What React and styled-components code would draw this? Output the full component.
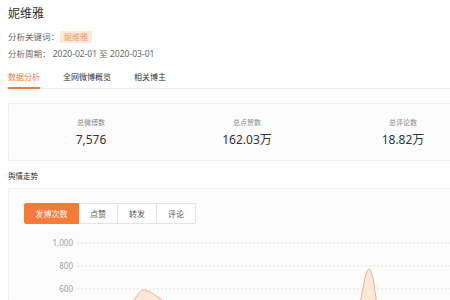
import styled, { createGlobalStyle } from "styled-components";

const GlobalStyle = createGlobalStyle`
  html, body {
    margin: 0;
    padding: 0;
    background: #ffffff;
    overflow: hidden;
  }
  body {
    font-family: "Noto Sans", "Noto Sans CJK SC", sans-serif;
    color: #333333;
  }
`;

const stats = [
  { label: "总微博数", value: "7,576" },
  { label: "总点赞数", value: "162.03万" },
  { label: "总评论数", value: "18.82万" },
];

const tabs = ["数据分析", "全网微博概览", "相关博主"];
const metrics = ["发博次数", "点赞", "转发", "评论"];
const ticks = [1000, 800, 600];

export default function App() {
  return (
    <Page>
      <GlobalStyle />
      <Title>妮维雅</Title>
      <MetaRow>
        分析关键词：<Tag>妮维雅</Tag>
      </MetaRow>
      <MetaRow>分析周期： 2020-02-01 至 2020-03-01</MetaRow>
      <Tabs>
        {tabs.map((t, i) => (
          <Tab key={t} $active={i === 0}>
            {t}
          </Tab>
        ))}
      </Tabs>
      <StatsCard>
        {stats.map((s) => (
          <Stat key={s.label}>
            <StatLabel>{s.label}</StatLabel>
            <StatValue>{s.value}</StatValue>
          </Stat>
        ))}
      </StatsCard>
      <SectionTitle>舆情走势</SectionTitle>
      <ChartCard>
        <ButtonGroup>
          {metrics.map((m, i) => (
            <MetricButton key={m} $active={i === 0}>
              {m}
            </MetricButton>
          ))}
        </ButtonGroup>
        <ChartSvg width="460" height="72">
          {ticks.map((v, i) => {
            const y = 15 + i * 23;
            return (
              <g key={v}>
                <text
                  x="49"
                  y={y + 3}
                  textAnchor="end"
                  fontSize="8"
                  fill="#9a9ea6"
                  fontFamily="Noto Sans, sans-serif"
                >
                  {v.toLocaleString("en-US")}
                </text>
                <line
                  x1="53"
                  x2="460"
                  y1={y}
                  y2={y}
                  stroke="#dcdfe6"
                  strokeDasharray="2 2"
                  strokeWidth="1"
                />
              </g>
            );
          })}
          <path
            d="M 53 140 C 80 120, 100 95, 110 72 C 114 66, 117 62, 119 62 C 125 62, 131 67, 138 72 C 158 86, 190 100, 230 104 C 280 108, 315 104, 330 92 C 338 80, 340 41, 345 41 C 350 41, 352 80, 357 100 C 365 120, 390 120, 460 118 L 460 160 L 53 160 Z"
            fill="#fde8d8"
            stroke="#e9b38d"
            strokeWidth="1"
          />
        </ChartSvg>
      </ChartCard>
    </Page>
  );
}

const Page = styled.div`
  width: 478px;
  padding: 6px 0 0 8px;
`;

const Title = styled.div`
  font-size: 12px;
  line-height: 16px;
  color: #333;
  margin-bottom: 6px;
`;

const MetaRow = styled.div`
  display: flex;
  align-items: center;
  font-size: 8.5px;
  line-height: 17px;
  color: #666;
`;

const Tag = styled.span`
  display: inline-block;
  margin-left: 1px;
  background: #fde8dc;
  color: #f49a63;
  border-radius: 2px;
  padding: 0 4px;
  line-height: 12px;
  font-size: 8px;
`;

const Tabs = styled.div`
  display: flex;
  gap: 23px;
  margin-top: 7px;
  border-bottom: 1px solid #ececec;
`;

const Tab = styled.div`
  font-size: 8px;
  line-height: 16px;
  padding-bottom: 2px;
  color: ${(p) => (p.$active ? "#f47b3a" : "#333")};
  border-bottom: 2px solid ${(p) => (p.$active ? "#f47b3a" : "transparent")};
  margin-bottom: -1px;
`;

const StatsCard = styled.div`
  display: grid;
  grid-template-columns: repeat(3, 1fr);
  margin-top: 14px;
  padding: 13px 4px 12px;
  background: #fcfcfc;
  border: 1px solid #efefef;
  border-radius: 2px;
`;

const Stat = styled.div`
  display: flex;
  flex-direction: column;
  align-items: center;
  gap: 3px;
`;

const StatLabel = styled.div`
  font-size: 7px;
  line-height: 12px;
  color: #888;
`;

const StatValue = styled.div`
  font-size: 12px;
  line-height: 16px;
  color: #333;
`;

const SectionTitle = styled.div`
  font-size: 7.5px;
  line-height: 12px;
  color: #333;
  margin-top: 9px;
`;

const ChartCard = styled.div`
  margin-top: 6px;
  padding: 14px 15px 0;
  background: #fcfcfc;
  border: 1px solid #efefef;
  border-radius: 2px;
`;

const ButtonGroup = styled.div`
  display: flex;
`;

const MetricButton = styled.div`
  width: ${(p) => (p.$active ? "55px" : "39px")};
  height: 21px;
  box-sizing: border-box;
  display: flex;
  align-items: center;
  justify-content: center;
  font-size: 8px;
  color: ${(p) => (p.$active ? "#fff" : "#555")};
  background: ${(p) => (p.$active ? "#f47b3a" : "#fff")};
  border: 1px solid ${(p) => (p.$active ? "#f47b3a" : "#e4e4e4")};
  border-left-width: ${(p) => (p.$active ? "1px" : "0")};
  border-radius: ${(p) => (p.$active ? "2px 0 0 2px" : "0")};
  &:last-child {
    border-radius: 0 2px 2px 0;
  }
`;

const ChartSvg = styled.svg`
  display: block;
  margin-top: 4px;
`;
